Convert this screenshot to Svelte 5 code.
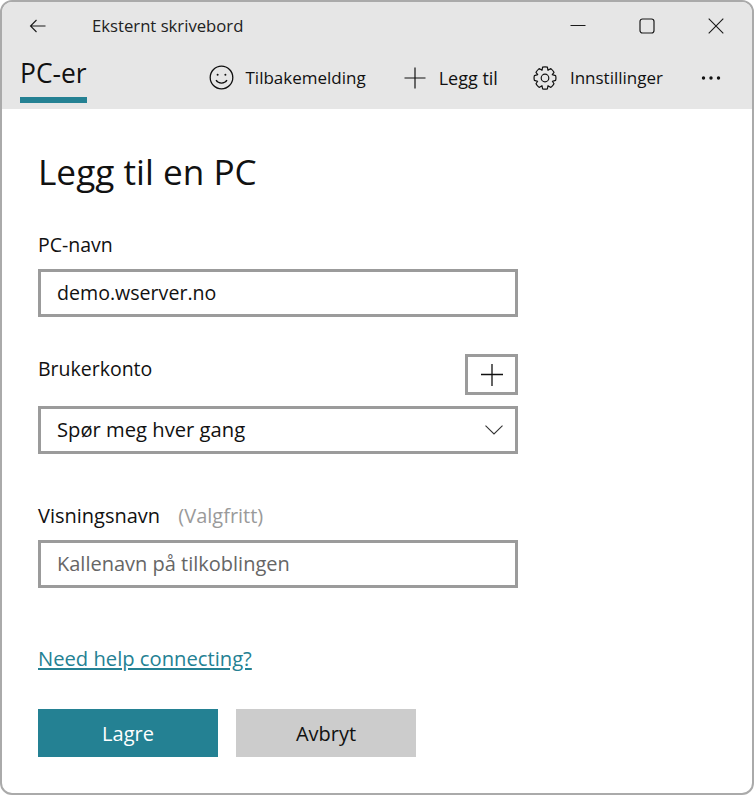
<script lang="ts">
    let pcName = $state('demo.wserver.no');
    let nickname = $state('');
    const accountLabel = 'Spør meg hver gang';
</script>

<div class="window">
    <header class="head">
        <div class="titlebar">
            <button class="icon-btn back" aria-label="Tilbake">
                <svg width="18" height="14" viewBox="0 0 18 14" fill="none" stroke="#1a1a1a" stroke-width="1.1">
                    <path d="M1.5 7H16.5M7.5 1L1.5 7L7.5 13" />
                </svg>
            </button>
            <span class="app-title">Eksternt skrivebord</span>
            <div class="win-controls">
                <svg class="win-btn" width="16" height="16" viewBox="0 0 16 16" fill="none" stroke="#1a1a1a" stroke-width="1.1"><path d="M0.5 7.5H15.5" /></svg>
                <svg class="win-btn" width="16" height="16" viewBox="0 0 16 16" fill="none" stroke="#1a1a1a" stroke-width="1.2"><rect x="1" y="1" width="14" height="14" rx="2.5" /></svg>
                <svg class="win-btn" width="16" height="16" viewBox="0 0 16 16" fill="none" stroke="#1a1a1a" stroke-width="1.1"><path d="M0.7 0.7L15.3 15.3M15.3 0.7L0.7 15.3" /></svg>
            </div>
        </div>
        <div class="tabbar">
            <div class="tab">PC-er</div>
            <nav class="actions">
                <span class="action feedback">
                    <svg width="25" height="25" viewBox="0 0 25 25" fill="none" stroke="#111" stroke-width="1.3">
                        <circle cx="12.5" cy="12.5" r="11.3" />
                        <circle cx="8.6" cy="9.8" r="1" fill="#111" stroke="none" />
                        <circle cx="16.4" cy="9.8" r="1" fill="#111" stroke="none" />
                        <path d="M7 15.2C9.5 19 15.5 19 18 15.2" />
                    </svg>
                    Tilbakemelding
                </span>
                <span class="action add">
                    <svg width="22" height="22" viewBox="0 0 22 22" fill="none" stroke="#111" stroke-width="1.2"><path d="M11 0.5V21.5M0.5 11H21.5" /></svg>
                    Legg til
                </span>
                <span class="action settings">
                    <svg width="24" height="24" viewBox="0 0 24 24" fill="none" stroke="#111" stroke-width="1.2" stroke-linejoin="round">
                        <circle cx="12" cy="12" r="3.8" />
                        <path d="M9.6 1.2C11 0.8 13 0.8 14.4 1.2L15 4.3L17.9 2.6C19 3.5 20.3 4.9 21 6.3L19.3 8.7L22.6 9.6C23 11 23 13 22.6 14.4L19.4 15.3L21 17.8C20.3 19.1 19 20.5 17.9 21.4L15 19.7L14.4 22.8C13 23.2 11 23.2 9.6 22.8L9 19.7L6.1 21.4C5 20.5 3.7 19.1 3 17.8L4.6 15.3L1.4 14.4C1 13 1 11 1.4 9.6L4.7 8.7L3 6.3C3.7 4.9 5 3.5 6.1 2.6L9 4.3Z" />
                    </svg>
                    Innstillinger
                </span>
                <svg class="more" width="20" height="4" viewBox="0 0 20 4" fill="#111"><circle cx="2.5" cy="2" r="1.7" /><circle cx="10" cy="2" r="1.7" /><circle cx="17.5" cy="2" r="1.7" /></svg>
            </nav>
        </div>
    </header>

    <main class="content">
        <h1>Legg til en PC</h1>

        <label class="field-label" for="pc">PC-navn</label>
        <input id="pc" class="box" bind:value={pcName} />

        <div class="account-row">
            <span class="field-label">Brukerkonto</span>
            <button class="add-btn" aria-label="Legg til konto">
                <svg width="24" height="24" viewBox="0 0 24 24" fill="none" stroke="#111" stroke-width="1.3"><path d="M12 1V23M1 11.5H23" /></svg>
            </button>
        </div>
        <div class="box select">
            <span>{accountLabel}</span>
            <svg width="18" height="10" viewBox="0 0 18 10" fill="none" stroke="#333" stroke-width="1.1"><path d="M0.5 0.7L9 9L17.5 0.7" /></svg>
        </div>

        <div class="field-label nick-label">Visningsnavn <span class="optional">(Valgfritt)</span></div>
        <input class="box nick" placeholder="Kallenavn på tilkoblingen" bind:value={nickname} />

        <a class="help" href="#help">Need help connecting?</a>

        <div class="buttons">
            <button class="btn primary">Lagre</button>
            <button class="btn">Avbryt</button>
        </div>
    </main>
</div>

<style>
    :global(body) {
        margin: 0;
        background: #fff;
    }
    .window {
        box-sizing: border-box;
        width: 754px;
        height: 795px;
        border: 2px solid #aaa;
        border-radius: 12px;
        overflow: hidden;
        background: #fff;
        color: #111;
        font-family: "Open Sans", "Noto Sans", sans-serif;
    }
    .head {
        background: #e6e6e6;
        height: 107px;
    }
    .titlebar {
        display: flex;
        align-items: center;
        height: 48px;
    }
    .icon-btn {
        border: none;
        background: none;
        padding: 0;
        display: flex;
    }
    .back {
        margin-left: 27px;
    }
    .app-title {
        margin-left: 45px;
        padding-bottom: 2px;
        font-size: 16.7px;
        color: #222;
    }
    .win-controls {
        margin-left: auto;
        margin-right: 28px;
        margin-top: -1px;
        display: flex;
        gap: 53px;
    }
    .tabbar {
        display: flex;
        height: 59px;
    }
    .tab {
        margin-left: 18px;
        width: 67px;
        height: 53px;
        box-sizing: border-box;
        border-bottom: 6px solid #248193;
        font-size: 26.4px;
        line-height: 47px;
        white-space: nowrap;
    }
    .actions {
        margin-left: auto;
        margin-right: 31px;
        display: flex;
        align-items: center;
        height: 55px;
        font-size: 17px;
    }
    .action {
        display: flex;
        align-items: center;
        gap: 12px;
    }
    .feedback {
        gap: 11px;
        margin-right: 38px;
    }
    .add {
        gap: 13px;
        margin-right: 35px;
        font-size: 18px;
    }
    .settings {
        gap: 13px;
        margin-right: 38px;
    }
    .content {
        padding: 37px 36px 0;
    }
    h1 {
        margin: 0 0 36px;
        font-size: 35.2px;
        font-weight: 400;
        line-height: 50px;
    }
    .field-label {
        display: block;
        font-size: 19.5px;
        line-height: 26px;
    }
    .box {
        box-sizing: border-box;
        display: block;
        width: 480px;
        height: 48px;
        margin-top: 11px;
        padding: 0 15px 2px 16px;
        border: 3px solid #9b9b9b;
        border-radius: 0;
        background: #fff;
        outline: none;
        color: #111;
        font: inherit;
        font-size: 19.6px;
    }
    .box::placeholder {
        color: #666;
        opacity: 1;
    }
    .nick {
        font-size: 20px;
    }
    .account-row {
        display: flex;
        justify-content: space-between;
        width: 480px;
        height: 41px;
        margin-top: 37px;
    }
    .account-row .field-label {
        margin-top: 2px;
    }
    .add-btn {
        box-sizing: border-box;
        width: 53px;
        height: 41px;
        padding: 0;
        border: 3px solid #9b9b9b;
        background: #fff;
        display: flex;
        align-items: center;
        justify-content: center;
    }
    .select {
        display: flex;
        align-items: center;
        justify-content: space-between;
        margin-top: 11px;
        font-size: 20.2px;
    }
    .select svg {
        margin-right: -3px;
        margin-top: 2px;
    }
    .nick-label {
        margin-top: 49px;
        font-size: 20px;
    }
    .optional {
        margin-left: 13px;
        color: #9a9a9a;
    }
    .help {
        display: block;
        width: max-content;
        margin-top: 57px;
        color: #248193;
        font-size: 20.2px;
        line-height: 26px;
    }
    .buttons {
        display: flex;
        gap: 18px;
        margin-top: 38px;
    }
    .btn {
        width: 180px;
        height: 48px;
        border: none;
        background: #cccccc;
        color: #111;
        font: inherit;
        font-size: 20px;
    }
    .primary {
        background: #248193;
        color: #fff;
    }
</style>
